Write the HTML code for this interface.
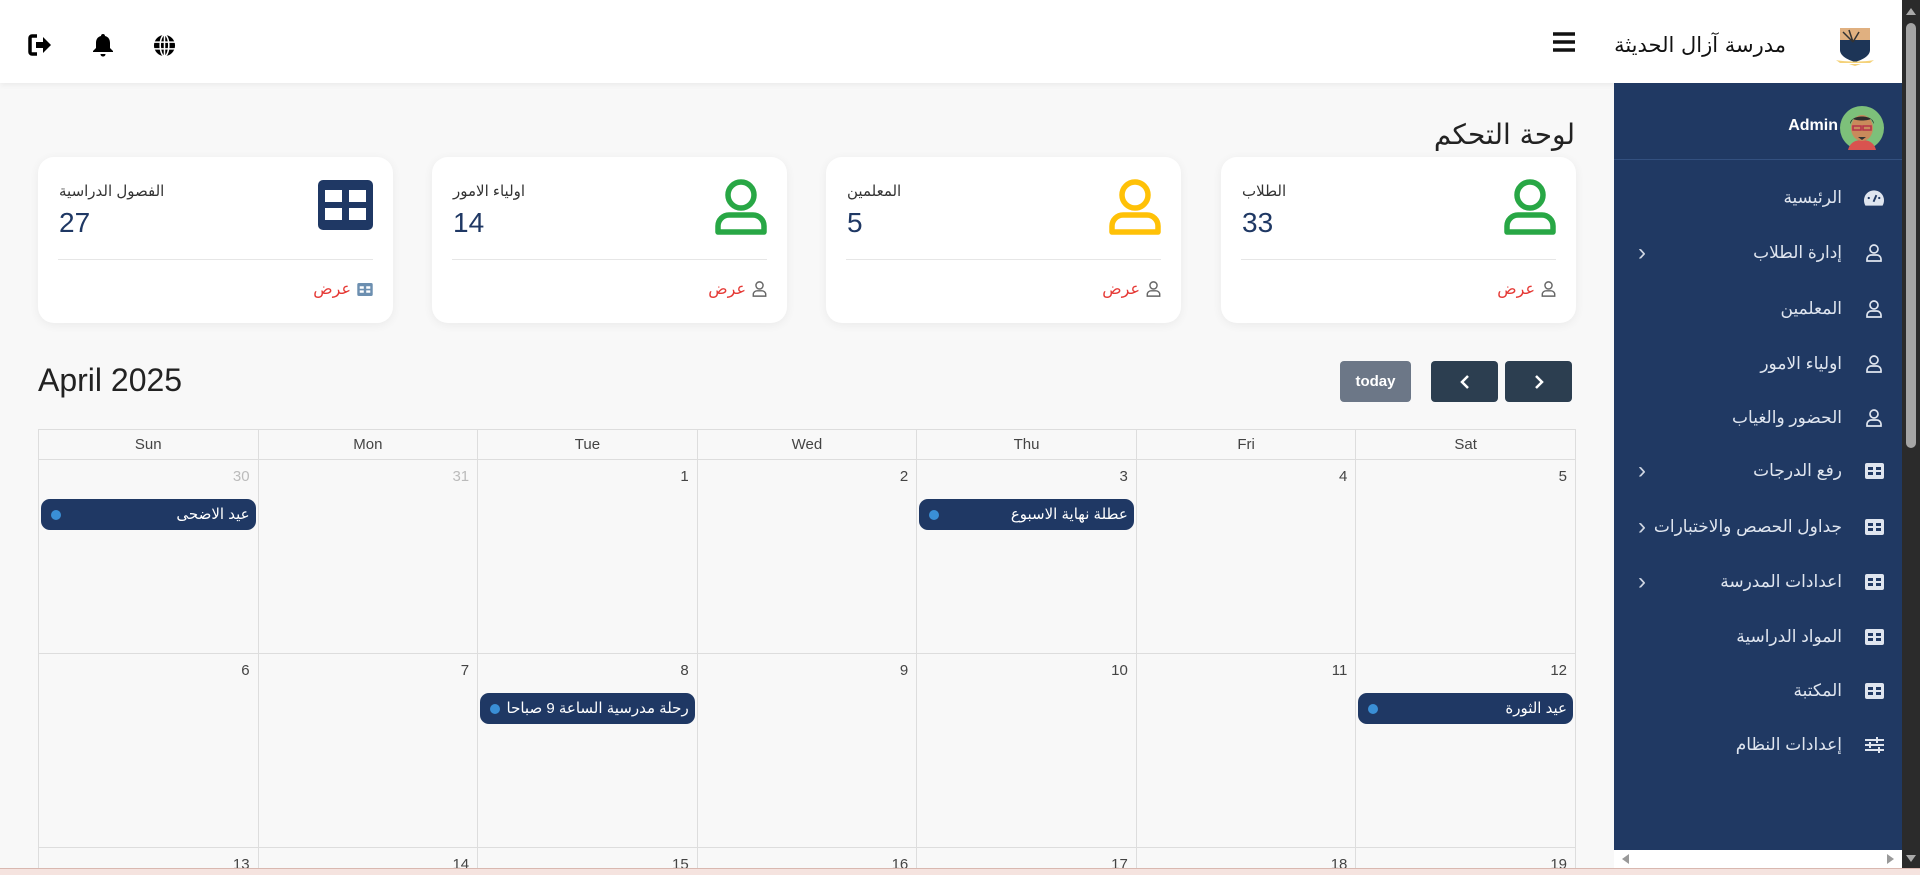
<!DOCTYPE html>
<html style="width:1920px;height:875px;overflow:hidden"><head><meta charset="utf-8">
<style>
*{box-sizing:border-box;margin:0;padding:0}
body{width:1920px;height:875px;overflow:hidden;background:#f8f8f8;font-family:"Liberation Sans","DejaVu Sans",sans-serif;position:relative;color:#222}
#wrap{position:absolute;left:0;top:0;width:1920px;height:868px;overflow:hidden}
.abs{position:absolute}
#hdr{left:0;top:0;width:1902px;height:83px;background:#fff;box-shadow:0 2px 6px rgba(0,0,0,.06)}
#side{left:1614px;top:83px;width:288px;height:767px;background:#203963}
#vs{left:1902px;top:0;width:18px;height:868px;background:#2b2b2b}
#hs{left:1614px;top:850px;width:288px;height:18px;background:#fff}
#bot{left:0;top:868px;width:1920px;height:7px;background:#f5e3df;border-top:1px solid #d9b8b0}
.mi{position:absolute;right:36px;width:260px;height:30px;color:#dfe5ef;font-size:17px;direction:rtl;display:flex;align-items:center}
.mi .ic{width:20px;height:20px;margin-left:22px;display:flex;align-items:center;justify-content:center}
.mi .ch{position:absolute;left:14px;font-size:24px;color:#cfd6e2;line-height:30px}
.card{position:absolute;top:157px;width:355px;height:166px;background:#fff;border-radius:16px;box-shadow:0 2px 10px rgba(0,0,0,.06)}
.card .lb{position:absolute;left:21px;top:25px;font-size:15px;color:#333}
.card .nm{position:absolute;left:21px;top:50px;font-size:28px;color:#1f3864}
.card .hr{position:absolute;left:20px;right:20px;top:102px;border-top:1px solid #e6e6e6}
.card .ft{position:absolute;right:20px;top:122px;font-size:16px;color:#e53935;display:flex;align-items:center;gap:6px}
.card .big{position:absolute;right:20px;top:22px}
table{position:absolute;left:38px;top:429px;width:1538px;border-collapse:collapse;table-layout:fixed}
td,th{border:1px solid #ddd;vertical-align:top}
th{height:30px;font-weight:normal;font-size:15px;color:#444;vertical-align:middle}
td{height:194px;position:relative}
tr.last td{height:22px}
.dn{position:absolute;right:8px;top:8px;font-size:15px;color:#444}
.dn.o{color:#bbb}
.ev{position:absolute;left:2px;right:2px;top:39px;height:31px;background:#1f3864;border-radius:9px;color:#fff;font-size:15px;direction:rtl;padding-right:6px;line-height:31px}
.ev:after{content:"";position:absolute;left:10px;top:11px;width:10px;height:10px;border-radius:50%;background:#3a8fd6}
.btn{position:absolute;top:361px;height:41px;border-radius:4px;color:#fff;display:flex;align-items:center;justify-content:center}
</style></head><body>
<div id="wrap">
<div id="hdr" class="abs">
  <svg class="abs" style="left:28px;top:34px" width="24" height="22" viewBox="0 0 24 22"><path d="M9 2H4a2 2 0 0 0-2 2v14a2 2 0 0 0 2 2h5" fill="none" stroke="#000" stroke-width="3.5"/><path d="M8 8h7V3l8 8-8 8v-5H8z" fill="#000"/></svg>
  <svg class="abs" style="left:92px;top:33px" width="22" height="24" viewBox="0 0 22 24"><path d="M11 1c1.2 0 2 .8 2 2 3.5.8 5 3.5 5 7v5l3 3v1H1v-1l3-3v-5c0-3.5 1.5-6.2 5-7 0-1.2.8-2 2-2z" fill="#000"/><path d="M8.5 21h5c0 1.5-1.1 2.5-2.5 2.5S8.5 22.5 8.5 21z" fill="#000"/></svg>
  <svg class="abs" style="left:153px;top:34px" width="23" height="23" viewBox="0 0 24 24"><circle cx="12" cy="12" r="11" fill="#000"/><g stroke="#fff" stroke-width="1.6" fill="none"><ellipse cx="12" cy="12" rx="4.5" ry="11"/><path d="M1 8.5h22M1 15.5h22M12 1v22"/></g></svg>
  <svg class="abs" style="left:1553px;top:32px" width="22" height="20" viewBox="0 0 22 20"><path d="M0 2h22M0 10h22M0 18h22" stroke="#111" stroke-width="3.5"/></svg>
  <div class="abs" style="right:116px;top:33px;font-size:21px;color:#111;font-family:'DejaVu Sans',sans-serif">مدرسة آزال الحديثة</div>
  <svg class="abs" style="left:1835px;top:24px" width="40" height="42" viewBox="0 0 40 42"><path d="M5 4h30v22c0 6-8 10-15 12C13 36 5 32 5 26z" fill="#1d3557"/><path d="M5 4h30v12H5z" fill="#e0b080"/><path d="M8 8l10 10M14 6l4 12M24 8l-6 10" stroke="#333" stroke-width="1.5"/><path d="M1 36c8 2 30 2 38 0l-4 3H5z" fill="#f4d27a"/><path d="M14 40h12l-6 2z" fill="#f4d27a"/></svg>
</div>
<div id="side" class="abs">
  <div class="abs" style="right:64px;top:34px;color:#fff;font-weight:bold;font-size:16px">Admin</div>
  <svg class="abs" style="left:226px;top:23px" width="44" height="44" viewBox="0 0 44 44"><circle cx="22" cy="22" r="22" fill="#7dc07a"/><path d="M8 44c2-8 8-10 14-10s12 2 14 10z" fill="#d9534f"/><ellipse cx="22" cy="22" rx="11" ry="13" fill="#c98a5b"/><path d="M10 18c0-10 24-10 24 0l-3-5c-4 2-14 2-18 0z" fill="#2d2d2d"/><path d="M13 20h8v4h-8zM23 20h8v4h-8z" fill="none" stroke="#b5334a" stroke-width="1.6"/><path d="M18 31h8l-4 3z" fill="#333"/></svg>
  <div class="abs" style="left:0;top:76px;width:288px;border-top:1px solid #33507f"></div>
</div>
<div class="mi" style="top:183px"><span class="ic"><svg width="21" height="16" viewBox="0 0 21 16"><path d="M10.5 0A10.5 10.5 0 0 0 0 10.5c0 2 .5 3.8 1.5 5.5h18c1-1.7 1.5-3.5 1.5-5.5A10.5 10.5 0 0 0 10.5 0z" fill="#dfe5ef"/><path d="M10 12l3-7" stroke="#203963" stroke-width="2"/><circle cx="5" cy="8" r="1.2" fill="#203963"/><circle cx="16" cy="8" r="1.2" fill="#203963"/></svg></span>الرئيسية</div>
<div class="mi" style="top:238px"><span class="ic"><svg width="16" height="18" viewBox="0 0 16 18"><circle cx="8" cy="5" r="4" fill="none" stroke="#dfe5ef" stroke-width="1.7"/><path d="M1 17v-2c0-2 2-4 4-4h6c2 0 4 2 4 4v2z" fill="none" stroke="#dfe5ef" stroke-width="1.7"/></svg></span>إدارة الطلاب<span class="ch">‹</span></div>
<div class="mi" style="top:294px"><span class="ic"><svg width="16" height="18" viewBox="0 0 16 18"><circle cx="8" cy="5" r="4" fill="none" stroke="#dfe5ef" stroke-width="1.7"/><path d="M1 17v-2c0-2 2-4 4-4h6c2 0 4 2 4 4v2z" fill="none" stroke="#dfe5ef" stroke-width="1.7"/></svg></span>المعلمين</div>
<div class="mi" style="top:349px"><span class="ic"><svg width="16" height="18" viewBox="0 0 16 18"><circle cx="8" cy="5" r="4" fill="none" stroke="#dfe5ef" stroke-width="1.7"/><path d="M1 17v-2c0-2 2-4 4-4h6c2 0 4 2 4 4v2z" fill="none" stroke="#dfe5ef" stroke-width="1.7"/></svg></span>اولياء الامور</div>
<div class="mi" style="top:403px"><span class="ic"><svg width="16" height="18" viewBox="0 0 16 18"><circle cx="8" cy="5" r="4" fill="none" stroke="#dfe5ef" stroke-width="1.7"/><path d="M1 17v-2c0-2 2-4 4-4h6c2 0 4 2 4 4v2z" fill="none" stroke="#dfe5ef" stroke-width="1.7"/></svg></span>الحضور والغياب</div>
<div class="mi" style="top:456px"><span class="ic"><svg width="19" height="16" viewBox="0 0 19 16"><rect width="19" height="16" rx="2" fill="#dfe5ef"/><path d="M3 4h5v3H3zM11 4h5v3h-5zM3 9h5v3H3zM11 9h5v3h-5z" fill="#203963"/></svg></span>رفع الدرجات<span class="ch">‹</span></div>
<div class="mi" style="top:512px"><span class="ic"><svg width="19" height="16" viewBox="0 0 19 16"><rect width="19" height="16" rx="2" fill="#dfe5ef"/><path d="M3 4h5v3H3zM11 4h5v3h-5zM3 9h5v3H3zM11 9h5v3h-5z" fill="#203963"/></svg></span>جداول الحصص والاختبارات<span class="ch">‹</span></div>
<div class="mi" style="top:567px"><span class="ic"><svg width="19" height="16" viewBox="0 0 19 16"><rect width="19" height="16" rx="2" fill="#dfe5ef"/><path d="M3 4h5v3H3zM11 4h5v3h-5zM3 9h5v3H3zM11 9h5v3h-5z" fill="#203963"/></svg></span>اعدادات المدرسة<span class="ch">‹</span></div>
<div class="mi" style="top:622px"><span class="ic"><svg width="19" height="16" viewBox="0 0 19 16"><rect width="19" height="16" rx="2" fill="#dfe5ef"/><path d="M3 4h5v3H3zM11 4h5v3h-5zM3 9h5v3H3zM11 9h5v3h-5z" fill="#203963"/></svg></span>المواد الدراسية</div>
<div class="mi" style="top:676px"><span class="ic"><svg width="19" height="16" viewBox="0 0 19 16"><rect width="19" height="16" rx="2" fill="#dfe5ef"/><path d="M3 4h5v3H3zM11 4h5v3h-5zM3 9h5v3H3zM11 9h5v3h-5z" fill="#203963"/></svg></span>المكتبة</div>
<div class="mi" style="top:730px"><span class="ic"><svg width="19" height="16" viewBox="0 0 19 16"><path d="M0 3h19M0 8h19M0 13h19" stroke="#dfe5ef" stroke-width="2"/><path d="M12 0v6M5 5v6M14 10v6" stroke="#dfe5ef" stroke-width="2"/></svg></span>إعدادات النظام</div>
<div id="vs" class="abs"><div class="abs" style="left:4px;top:8px;border:5px solid transparent;border-bottom:7px solid #aaa;border-top:0"></div><div class="abs" style="left:4px;top:23px;width:10px;height:425px;border-radius:5px;background:#a5a5a5"></div><div class="abs" style="left:4px;top:855px;border:5px solid transparent;border-top:7px solid #aaa;border-bottom:0"></div></div>
<div id="hs" class="abs"><div class="abs" style="left:8px;top:4px;border:5px solid transparent;border-right:7px solid #999;border-left:0"></div><div class="abs" style="right:8px;top:4px;border:5px solid transparent;border-left:7px solid #999;border-right:0"></div></div>

<div class="abs" style="right:345px;top:118px;font-size:28px;color:#222;font-family:'DejaVu Sans',sans-serif">لوحة التحكم</div>

<div class="card" style="left:1221px"><div class="lb">الطلاب</div><div class="nm">33</div><svg class="big" width="52" height="56" viewBox="0 0 52 56"><circle cx="26" cy="16" r="13" fill="none" stroke="#28a745" stroke-width="5.5"/><path d="M3 53v-6c0-6 5-11 11-11h24c6 0 11 5 11 11v6z" fill="none" stroke="#28a745" stroke-width="5.5" stroke-linejoin="round"/></svg><div class="hr"></div><div class="ft">عرض<svg width="15" height="16" viewBox="0 0 16 18"><circle cx="8" cy="5" r="4" fill="none" stroke="#666" stroke-width="1.6"/><path d="M1 17v-2c0-2 2-4 4-4h6c2 0 4 2 4 4v2z" fill="none" stroke="#666" stroke-width="1.6"/></svg></div></div>
<div class="card" style="left:826px"><div class="lb">المعلمين</div><div class="nm">5</div><svg class="big" width="52" height="56" viewBox="0 0 52 56"><circle cx="26" cy="16" r="13" fill="none" stroke="#ffc107" stroke-width="5.5"/><path d="M3 53v-6c0-6 5-11 11-11h24c6 0 11 5 11 11v6z" fill="none" stroke="#ffc107" stroke-width="5.5" stroke-linejoin="round"/></svg><div class="hr"></div><div class="ft">عرض<svg width="15" height="16" viewBox="0 0 16 18"><circle cx="8" cy="5" r="4" fill="none" stroke="#666" stroke-width="1.6"/><path d="M1 17v-2c0-2 2-4 4-4h6c2 0 4 2 4 4v2z" fill="none" stroke="#666" stroke-width="1.6"/></svg></div></div>
<div class="card" style="left:432px"><div class="lb">اولياء الامور</div><div class="nm">14</div><svg class="big" width="52" height="56" viewBox="0 0 52 56"><circle cx="26" cy="16" r="13" fill="none" stroke="#28a745" stroke-width="5.5"/><path d="M3 53v-6c0-6 5-11 11-11h24c6 0 11 5 11 11v6z" fill="none" stroke="#28a745" stroke-width="5.5" stroke-linejoin="round"/></svg><div class="hr"></div><div class="ft">عرض<svg width="15" height="16" viewBox="0 0 16 18"><circle cx="8" cy="5" r="4" fill="none" stroke="#666" stroke-width="1.6"/><path d="M1 17v-2c0-2 2-4 4-4h6c2 0 4 2 4 4v2z" fill="none" stroke="#666" stroke-width="1.6"/></svg></div></div>
<div class="card" style="left:38px"><div class="lb">الفصول الدراسية</div><div class="nm">27</div><svg class="big" style="top:23px" width="55" height="50" viewBox="0 0 55 50"><rect width="55" height="50" rx="5" fill="#1f3864"/><path d="M7 10h17v12H7zM31 10h17v12H31zM7 28h17v12H7zM31 28h17v12H31z" fill="#fff"/></svg><div class="hr"></div><div class="ft">عرض<svg width="16" height="13" viewBox="0 0 19 16"><rect width="19" height="16" rx="2" fill="#6c8fb0"/><path d="M3 4h5v3H3zM11 4h5v3h-5zM3 9h5v3H3zM11 9h5v3h-5z" fill="#fff"/></svg></div></div>

<div class="abs" style="left:38px;top:362px;font-size:32px;color:#222">April 2025</div>
<div class="btn" style="left:1340px;width:71px;background:#6c7787;font-size:15px;font-weight:bold">today</div>
<div class="btn" style="left:1431px;width:67px;background:#2c3e50"><svg width="12" height="16" viewBox="0 0 12 16"><path d="M9 2L3 8l6 6" fill="none" stroke="#fff" stroke-width="2.5"/></svg></div>
<div class="btn" style="left:1505px;width:67px;background:#2c3e50"><svg width="12" height="16" viewBox="0 0 12 16"><path d="M3 2l6 6-6 6" fill="none" stroke="#fff" stroke-width="2.5"/></svg></div>

<table>
<tr><th>Sun</th><th>Mon</th><th>Tue</th><th>Wed</th><th>Thu</th><th>Fri</th><th>Sat</th></tr>
<tr><td><span class="dn o">30</span><div class="ev">عيد الاضحى</div></td><td><span class="dn o">31</span></td><td><span class="dn">1</span></td><td><span class="dn">2</span></td><td><span class="dn">3</span><div class="ev">عطلة نهاية الاسبوع</div></td><td><span class="dn">4</span></td><td><span class="dn">5</span></td></tr>
<tr><td><span class="dn">6</span></td><td><span class="dn">7</span></td><td><span class="dn">8</span><div class="ev">رحلة مدرسية الساعة 9 صباحا</div></td><td><span class="dn">9</span></td><td><span class="dn">10</span></td><td><span class="dn">11</span></td><td><span class="dn">12</span><div class="ev">عيد الثورة</div></td></tr>
<tr class="last"><td><span class="dn">13</span></td><td><span class="dn">14</span></td><td><span class="dn">15</span></td><td><span class="dn">16</span></td><td><span class="dn">17</span></td><td><span class="dn">18</span></td><td><span class="dn">19</span></td></tr>
</table>
</div>
<div id="bot" class="abs"></div>
</body></html>
